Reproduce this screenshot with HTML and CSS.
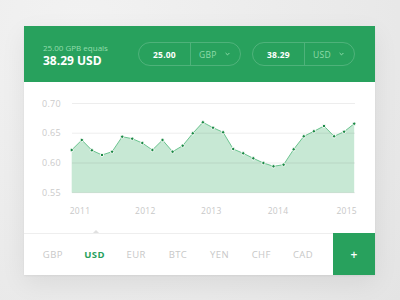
FILE: index.html
```html
<!DOCTYPE html>
<html>
<head>
<meta charset="utf-8">
<link rel="stylesheet" href="styles.css">
</head>
<body>
<div class="card">
  <div class="header">
    <div class="summary">
      <div class="equals">25.00 GPB equals</div>
      <div class="result">38.29 USD</div>
    </div>
    <div class="pills">
      <div class="pill">
        <span class="amount">25.00</span>
        <span class="currency">GBP <svg class="chev" width="5" height="4" viewBox="0 0 5 4"><path d="M0.6 1 L2.5 2.9 L4.4 1" fill="none" stroke="#8fdcaa" stroke-width="1"/></svg></span>
      </div>
      <div class="pill">
        <span class="amount">38.29</span>
        <span class="currency">USD <svg class="chev" width="5" height="4" viewBox="0 0 5 4"><path d="M0.6 1 L2.5 2.9 L4.4 1" fill="none" stroke="#8fdcaa" stroke-width="1"/></svg></span>
      </div>
    </div>
  </div>
  <svg class="chart" width="351" height="151" viewBox="0 0 351 151">
    <g class="ylabels">
      <text x="37" y="24.6">0.70</text>
      <text x="37" y="54.3">0.65</text>
      <text x="37" y="84">0.60</text>
      <text x="37" y="113.7">0.55</text>
    </g>
    <polygon class="area" points="47.7,68 57.8,58 67.9,68.3 78,73 88.1,69.7 98.2,54.7 108.2,56.7 118.3,61 128.4,68 138.5,58 148.6,69.7 158.7,63.7 168.8,51.3 178.9,40.3 189,45.7 199.1,50.3 209.2,67 219.2,71.3 229.3,76.3 239.4,81 249.5,84.3 259.6,82.7 269.7,67.3 279.8,54.3 289.9,49.3 300,44 310.1,54.3 320.1,49.7 330.2,41.7 330.2,110.7 47.7,110.7"/>
    <g class="grid">
      <line x1="48" y1="21.5" x2="331" y2="21.5"/>
      <line x1="48" y1="51.2" x2="331" y2="51.2"/>
      <line x1="48" y1="81" x2="331" y2="81"/>
      <line x1="48" y1="110.7" x2="331" y2="110.7"/>
    </g>
    <polyline class="line" points="47.7,68 57.8,58 67.9,68.3 78,73 88.1,69.7 98.2,54.7 108.2,56.7 118.3,61 128.4,68 138.5,58 148.6,69.7 158.7,63.7 168.8,51.3 178.9,40.3 189,45.7 199.1,50.3 209.2,67 219.2,71.3 229.3,76.3 239.4,81 249.5,84.3 259.6,82.7 269.7,67.3 279.8,54.3 289.9,49.3 300,44 310.1,54.3 320.1,49.7 330.2,41.7"/>
    <g class="dots">
      <circle cx="47.7" cy="68" r="1.7"/><circle cx="57.8" cy="58" r="1.7"/><circle cx="67.9" cy="68.3" r="1.7"/><circle cx="78" cy="73" r="1.7"/><circle cx="88.1" cy="69.7" r="1.7"/><circle cx="98.2" cy="54.7" r="1.7"/><circle cx="108.2" cy="56.7" r="1.7"/><circle cx="118.3" cy="61" r="1.7"/><circle cx="128.4" cy="68" r="1.7"/><circle cx="138.5" cy="58" r="1.7"/><circle cx="148.6" cy="69.7" r="1.7"/><circle cx="158.7" cy="63.7" r="1.7"/><circle cx="168.8" cy="51.3" r="1.7"/><circle cx="178.9" cy="40.3" r="1.7"/><circle cx="189" cy="45.7" r="1.7"/><circle cx="199.1" cy="50.3" r="1.7"/><circle cx="209.2" cy="67" r="1.7"/><circle cx="219.2" cy="71.3" r="1.7"/><circle cx="229.3" cy="76.3" r="1.7"/><circle cx="239.4" cy="81" r="1.7"/><circle cx="249.5" cy="84.3" r="1.7"/><circle cx="259.6" cy="82.7" r="1.7"/><circle cx="269.7" cy="67.3" r="1.7"/><circle cx="279.8" cy="54.3" r="1.7"/><circle cx="289.9" cy="49.3" r="1.7"/><circle cx="300" cy="44" r="1.7"/><circle cx="310.1" cy="54.3" r="1.7"/><circle cx="320.1" cy="49.7" r="1.7"/><circle cx="330.2" cy="41.7" r="1.7"/>
    </g>
    <g class="xlabels">
      <text x="56" y="132">2011</text>
      <text x="121.3" y="132">2012</text>
      <text x="187.3" y="132">2013</text>
      <text x="254" y="132">2014</text>
      <text x="322.7" y="132">2015</text>
    </g>
  </svg>
  <div class="tabs">
    <div class="tab">GBP</div>
    <div class="tab active">USD</div>
    <div class="tab">EUR</div>
    <div class="tab">BTC</div>
    <div class="tab">YEN</div>
    <div class="tab">CHF</div>
    <div class="tab">CAD</div>
    <div class="add">+</div>
  </div>
</div>
</body>
</html>
```
FILE: styles.css
```css
html, body {
  margin: 0;
  height: 100%;
}
body {
  background: radial-gradient(circle at 20% 10%, #f2f2f2 0%, #e9e9e9 70%, #e4e4e4 100%);
  padding: 26px 0 0 24px;
  box-sizing: border-box;
  font-family: "Open Sans", "Noto Sans", sans-serif;
  overflow: hidden;
}
.card {
  width: 351px;
  background: #fff;
  box-shadow: 0 8px 24px rgba(0, 0, 0, 0.07), 0 1px 2px rgba(0, 0, 0, 0.05);
}
.header {
  height: 56px;
  background: #28a15d;
  display: flex;
  align-items: center;
  padding: 0 20px 0 19px;
}
.summary {
  display: flex;
  flex-direction: column;
  margin-top: 1px;
}
.equals {
  font-size: 8px;
  color: #93dcac;
  line-height: 11px;
}
.result {
  font-size: 12px;
  font-weight: 700;
  color: #fff;
  line-height: 15px;
}
.pills {
  margin-left: auto;
  display: flex;
  gap: 11px;
}
.pill {
  width: 103px;
  height: 24px;
  box-sizing: border-box;
  border: 1px solid rgba(255, 255, 255, 0.18);
  border-radius: 12px;
  display: flex;
  align-items: stretch;
}
.amount {
  width: 51px;
  border-right: 1px solid rgba(255, 255, 255, 0.18);
  display: flex;
  align-items: center;
  justify-content: center;
  font-size: 8.5px;
  font-weight: 700;
  color: #fff;
  letter-spacing: 0.2px;
}
.currency {
  flex: 1;
  display: flex;
  align-items: center;
  padding-left: 8px;
  font-size: 8.5px;
  color: #8fdcaa;
  letter-spacing: 0.3px;
}
.chev {
  margin-left: 8px;
}
.chart {
  display: block;
}
.ylabels text {
  font-size: 9px;
  fill: #cbcbcb;
  text-anchor: end;
  font-family: "Open Sans", sans-serif;
  letter-spacing: 0.3px;
}
.xlabels text {
  font-size: 8.5px;
  fill: #c8c8c8;
  text-anchor: middle;
  font-family: "Open Sans", sans-serif;
  letter-spacing: 0.3px;
}
.area {
  fill: #c7e8d4;
}
.grid line {
  stroke: rgba(0, 0, 0, 0.07);
  stroke-width: 1;
}
.line {
  fill: none;
  stroke: #6cc490;
  stroke-width: 1;
}
.dots circle {
  fill: #1b8a45;
  stroke: #fff;
  stroke-width: 0.9;
}
.tabs {
  display: flex;
  align-items: stretch;
  height: 41px;
  border-top: 1px solid #eeeeee;
  padding-left: 8px;
}
.tab {
  width: 41.7px;
  display: flex;
  align-items: center;
  justify-content: center;
  font-size: 9.5px;
  color: #c8c8c8;
  letter-spacing: 0.4px;
  position: relative;
}
.tab.active {
  color: #28a15d;
  font-weight: 700;
}
.tab.active::before {
  content: "";
  position: absolute;
  top: -4px;
  left: 50%;
  margin-left: -2px;
  border-left: 3px solid transparent;
  border-right: 3px solid transparent;
  border-bottom: 3px solid #e0e0e0;
}
.add {
  margin-left: auto;
  width: 42px;
  margin-top: -1px;
  background: #28a15d;
  color: #fff;
  font-size: 12px;
  font-weight: 600;
  display: flex;
  align-items: center;
  justify-content: center;
}
```
